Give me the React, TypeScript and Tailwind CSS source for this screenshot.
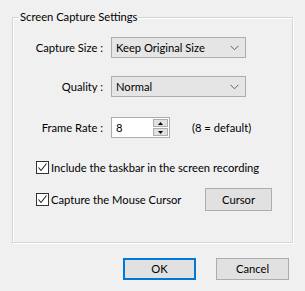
import React from "react";

const Chevron = () => (
  <svg width="9" height="6" viewBox="0 0 9 6" className="shrink-0">
    <path d="M0.5 0.8 L4.5 4.8 L8.5 0.8" fill="none" stroke="#606060" strokeWidth="1" />
  </svg>
);

const Check = ({ checked }: { checked: boolean }) => (
  <span className="w-[13px] h-[13px] border border-[#333333] bg-white flex items-center justify-center shrink-0">
    {checked && (
      <svg width="11" height="11" viewBox="0 0 11 11">
        <path d="M1.5 5.5 L4 8.5 L9.5 1.5" fill="none" stroke="#222222" strokeWidth="1.1" />
      </svg>
    )}
  </span>
);

const Dropdown = ({ value }: { value: string }) => (
  <div className="w-[135px] h-[21px] border border-[#adadad] bg-[#e5e5e5] flex items-center justify-between pl-[4px] pr-[6px]">
    <span>{value}</span>
    <Chevron />
  </div>
);

const Label = ({ text }: { text: string }) => (
  <span className="w-[90px] text-right shrink-0">{text}</span>
);

const Btn = ({ label, primary }: { label: string; primary?: boolean }) => (
  <button
    className={
      primary
        ? "w-[73px] h-[22px] border-2 border-[#0078d7] bg-[#e1e1e1] flex items-center justify-center"
        : "w-[73px] h-[22px] border border-[#adadad] bg-[#e1e1e1] flex items-center justify-center"
    }
  >
    {label}
  </button>
);

export default function App() {
  return (
    <div className="w-[305px] h-[291px] bg-[#f0f0f0] text-black text-[11.2px] leading-none font-['Lato',sans-serif] whitespace-nowrap overflow-hidden pt-[17px]">
      <div className="relative ml-[12px] w-[281px] h-[226px] border border-[#d5d5d5] shadow-[inset_1px_1px_0_#ffffff,1px_1px_0_#ffffff] pt-[19px]">
        <span className="absolute left-[6px] -top-[7px] bg-[#f0f0f0] px-[1px]">Screen Capture Settings</span>

        <div className="flex items-center gap-[8px] h-[21px]">
          <Label text="Capture Size :" />
          <Dropdown value="Keep Original Size" />
        </div>

        <div className="flex items-center gap-[8px] h-[21px] mt-[18px]">
          <Label text="Quality :" />
          <Dropdown value="Normal" />
        </div>

        <div className="flex items-center gap-[8px] h-[21px] mt-[20px]">
          <Label text="Frame Rate :" />
          <div className="w-[59px] h-[21px] border border-[#acacac] bg-white flex items-center justify-between pl-[4px] pr-[1px]">
            <span>8</span>
            <div className="flex flex-col gap-[1px]">
              <span className="w-[15px] h-[8px] border border-[#adadad] bg-[#e1e1e1] flex items-center justify-center">
                <svg width="5" height="3" viewBox="0 0 5 3"><path d="M2.5 0 L5 3 L0 3 Z" fill="#000" /></svg>
              </span>
              <span className="w-[15px] h-[8px] border border-[#adadad] bg-[#e1e1e1] flex items-center justify-center">
                <svg width="5" height="3" viewBox="0 0 5 3"><path d="M0 0 L5 0 L2.5 3 Z" fill="#000" /></svg>
              </span>
            </div>
          </div>
          <span className="ml-[14px]">(8 = default)</span>
        </div>

        <div className="flex items-center gap-[2px] h-[13px] mt-[23px] pl-[23px]">
          <Check checked />
          <span>Include the taskbar in the screen recording</span>
        </div>

        <div className="flex items-center h-[23px] mt-[14px] pl-[23px] pr-[20px]">
          <Check checked />
          <span className="ml-[2px]">Capture the Mouse Cursor</span>
          <button className="ml-auto w-[67px] h-[23px] border border-[#adadad] bg-[#e1e1e1] flex items-center justify-center">
            Cursor
          </button>
        </div>
      </div>

      <div className="flex justify-end gap-[20px] pr-[16px] mt-[15px]">
        <Btn label="OK" primary />
        <Btn label="Cancel" />
      </div>
    </div>
  );
}
